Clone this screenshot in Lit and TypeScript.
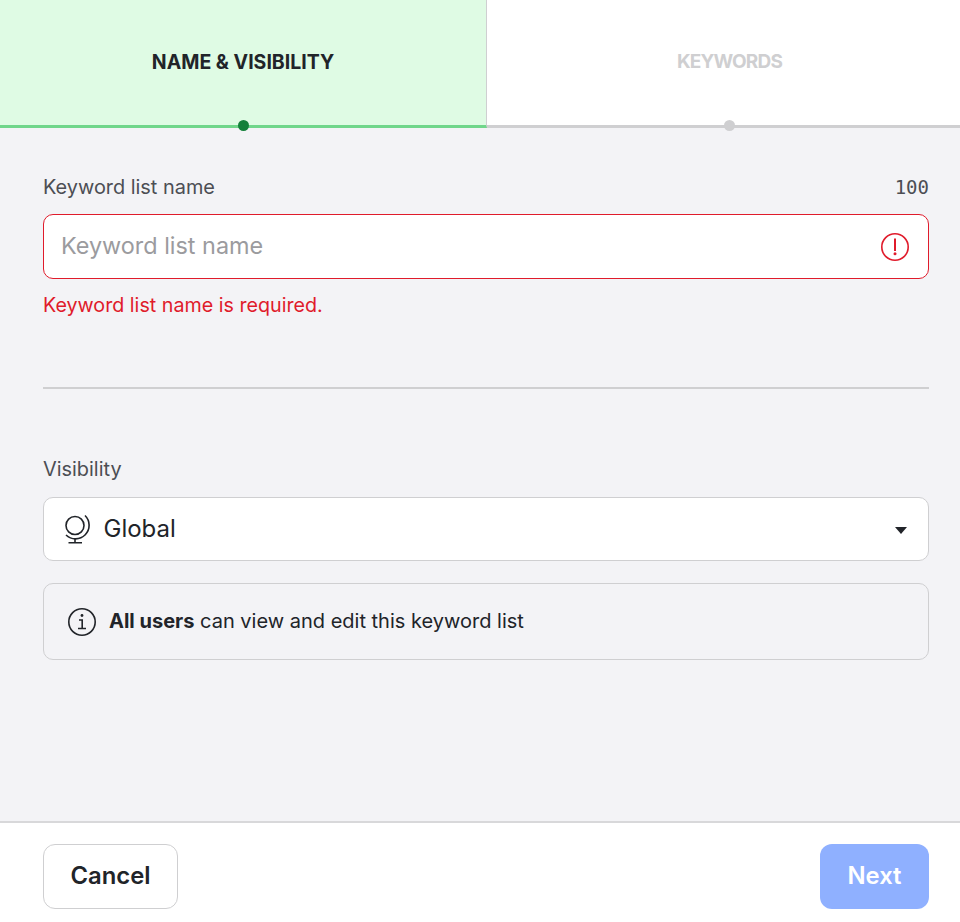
import {LitElement, html, css} from "lit";
import {customElement} from "lit/decorators.js";

@customElement("app-root")
class AppRoot extends LitElement {
    static styles = css`
        :host {
            display: flex;
            flex-direction: column;
            height: 922px;
            overflow: hidden;
            background: #f3f3f6;
            color: #212429;
            font-family: Inter, "Liberation Sans", sans-serif;
        }

        .steps {
            display: flex;
            height: 128px;
            flex: none;
        }

        .step {
            position: relative;
            flex: none;
            width: 485px;
            display: flex;
            align-items: center;
            justify-content: center;
            height: 123px;
            padding-bottom: 2px;
            background: #fff;
            border-bottom: 3px solid #cfcfd1;
            color: #cfcfd1;
            font-size: 19px;
            font-weight: 700;
            letter-spacing: -0.8px;
        }

        .step.active {
            width: 486px;
            background: #dffbe4;
            border-bottom-color: #70d68a;
            border-right: 1px solid #cfcfd1;
            color: #212429;
            font-size: 19.5px;
            letter-spacing: 0;
        }

        .dot {
            position: absolute;
            left: 50%;
            bottom: -6px;
            width: 11px;
            height: 11px;
            margin-left: -5.5px;
            border-radius: 50%;
            background: #cfcfd1;
        }

        .step.active .dot {
            background: #14803a;
        }

        .content {
            flex: 1;
            padding: 48px 31px 0 43px;
        }

        .label-row {
            display: flex;
            justify-content: space-between;
            align-items: center;
            height: 22px;
            margin-bottom: 16px;
            font-size: 19.9px;
            color: #4c4e54;
        }

        .label-row.visibility {
            margin-bottom: 17px;
        }

        .count {
            font-family: "DejaVu Sans Mono", monospace;
            font-size: 19px;
        }

        .field {
            box-sizing: border-box;
            display: flex;
            align-items: center;
            justify-content: space-between;
            height: 65px;
            padding: 0 18px 0 17px;
            background: #fff;
            border: 1px solid #e01b2b;
            border-radius: 10px;
            font-size: 23.4px;
            color: #9b9b9e;
        }

        .text {
            padding-bottom: 2px;
        }

        .error {
            margin-top: 15px;
            height: 22px;
            line-height: 22px;
            font-size: 19.7px;
            color: #e01b2b;
        }

        hr {
            margin: 71px 0 69px;
            border: none;
            border-top: 2px solid #cfcfd1;
        }

        .select {
            box-sizing: border-box;
            display: flex;
            align-items: center;
            gap: 13.5px;
            height: 64px;
            padding: 0 20px;
            background: #fff;
            border: 1px solid #cfcfd1;
            border-radius: 10px;
            font-size: 24px;
            color: #212429;
        }

        .caret {
            margin: 3px 1px 0 auto;
            width: 0;
            height: 0;
            border-left: 6px solid transparent;
            border-right: 6px solid transparent;
            border-top: 7px solid #212429;
        }

        .info {
            box-sizing: border-box;
            display: flex;
            align-items: center;
            gap: 12px;
            height: 77px;
            margin-top: 22px;
            padding: 0 23px;
            border: 1px solid #cfcfd1;
            border-radius: 10px;
            font-size: 20px;
        }

        .info b {
            font-weight: 700;
        }

        .footer {
            box-sizing: border-box;
            flex: none;
            display: flex;
            justify-content: space-between;
            height: 101px;
            padding: 21px 31px 0 43px;
            background: #fff;
            border-top: 2px solid #d8d8da;
        }

        .btn {
            box-sizing: border-box;
            display: flex;
            align-items: center;
            justify-content: center;
            height: 65px;
            padding-bottom: 2px;
            border-radius: 12px;
            font-size: 23.8px;
            font-weight: 600;
        }

        .cancel {
            width: 135px;
            background: #fff;
            border: 1px solid #cfcfd1;
        }

        .next {
            width: 109px;
            background: #8fb0ff;
            color: #fff;
        }

        svg {
            display: block;
            flex: none;
        }
    `;

    override render() {
        return html`
            <div class="steps">
                <div class="step active">NAME &amp; VISIBILITY<span class="dot"></span></div>
                <div class="step">KEYWORDS<span class="dot"></span></div>
            </div>
            <div class="content">
                <div class="label-row"><span>Keyword list name</span><span class="count">100</span></div>
                <div class="field">
                    <span class="text">Keyword list name</span>
                    <svg width="30" height="30" viewBox="0 0 30 30" fill="none" stroke="#e01b2b" stroke-width="1.6">
                        <circle cx="15" cy="15" r="13.2"></circle>
                        <path d="M15 6.500v12.500" stroke-width="2"></path>
                        <circle cx="15" cy="21.700" r="1.500" fill="#e01b2b" stroke="none"></circle>
                    </svg>
                </div>
                <div class="error">Keyword list name is required.</div>
                <hr />
                <div class="label-row visibility">Visibility</div>
                <div class="select">
                    <svg width="26" height="30" viewBox="0 0 26 30" fill="none" stroke="#212429" stroke-width="1.6">
                        <circle cx="11" cy="11.500" r="9"></circle>
                        <path d="M21 1.500A13.600 13.600 0 0 1 2 21"></path>
                        <path d="M11 24.500v4M4.500 28.700H18"></path>
                    </svg>
                    <span class="text">Global</span>
                    <span class="caret"></span>
                </div>
                <div class="info">
                    <svg width="30" height="30" viewBox="0 0 30 30" fill="none" stroke="#212429" stroke-width="1.6">
                        <circle cx="15" cy="15" r="13.2"></circle>
                        <path d="M12 13h3.200v8M11 21.500h8"></path>
                        <circle cx="15" cy="8.500" r="1.400" fill="#212429" stroke="none"></circle>
                    </svg>
                    <span class="text"><b>All users</b> can view and edit this keyword list</span>
                </div>
            </div>
            <div class="footer">
                <div class="btn cancel">Cancel</div>
                <div class="btn next">Next</div>
            </div>
        `;
    }
}

declare global {
    interface HTMLElementTagNameMap {
        "app-root": AppRoot;
    }
}
